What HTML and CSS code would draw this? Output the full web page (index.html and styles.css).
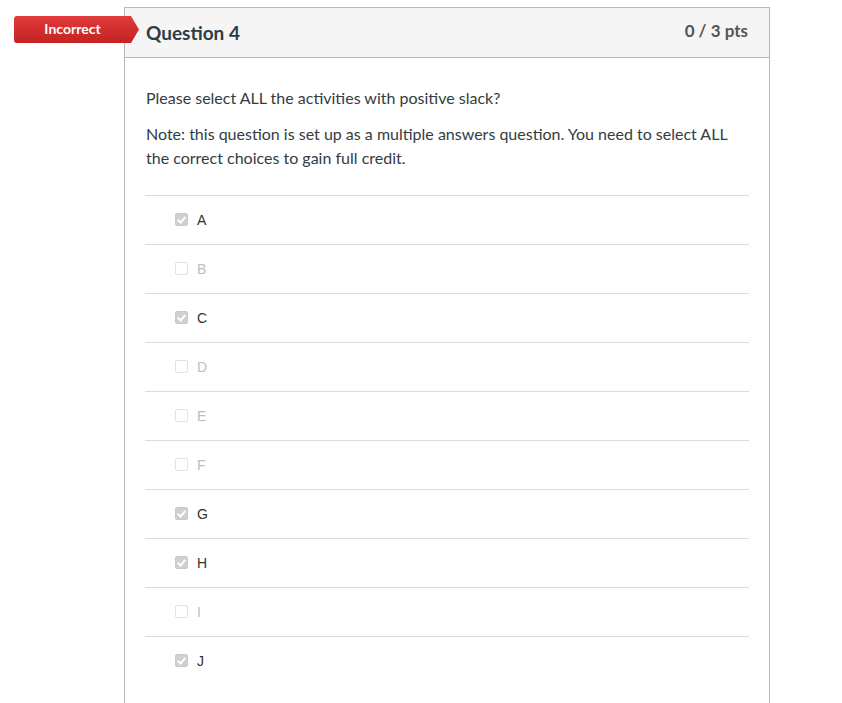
FILE: index.html
```html
<!DOCTYPE html>
<html>
<head>
<meta charset="utf-8">
<link rel="stylesheet" href="styles.css">
</head>
<body>
<div class="page">
  <div class="question">
    <div class="badge">Incorrect</div>
    <div class="q-header">
      <span class="q-title">Question 4</span>
      <span class="q-pts">0 / 3 pts</span>
    </div>
    <div class="q-body">
      <p>Please select ALL the activities with positive slack?</p>
      <p>Note: this question is set up as a multiple answers question. You need to select ALL the correct choices to gain full credit.</p>
      <div class="answers">
        <div class="answer sel"><span class="cb"></span><span class="lbl">A</span></div>
        <div class="answer"><span class="cb"></span><span class="lbl">B</span></div>
        <div class="answer sel"><span class="cb"></span><span class="lbl">C</span></div>
        <div class="answer"><span class="cb"></span><span class="lbl">D</span></div>
        <div class="answer"><span class="cb"></span><span class="lbl">E</span></div>
        <div class="answer"><span class="cb"></span><span class="lbl">F</span></div>
        <div class="answer sel"><span class="cb"></span><span class="lbl">G</span></div>
        <div class="answer sel"><span class="cb"></span><span class="lbl">H</span></div>
        <div class="answer"><span class="cb"></span><span class="lbl">I</span></div>
        <div class="answer sel"><span class="cb"></span><span class="lbl">J</span></div>
      </div>
    </div>
  </div>
</div>
</body>
</html>
```

FILE: styles.css
```css
html, body {
  margin: 0;
  padding: 0;
  background: #fff;
  font-family: Lato, "Open Sans", sans-serif;
  color: #2d3b45;
  overflow: hidden;
}
.page {
  padding: 7px 0 0 124px;
}
.question {
  position: relative;
  width: 644px;
  border: 1px solid #b9b9b9;
  border-bottom: none;
  min-height: 720px;
}
.badge {
  position: absolute;
  left: -111px;
  top: 8px;
  width: 117px;
  height: 27px;
  padding-right: 8px;
  box-sizing: content-box;
  background: linear-gradient(#e13b3c, #c52222);
  border-radius: 3px 0 0 3px;
  color: #fff;
  font-weight: 700;
  font-size: 14px;
  line-height: 26px;
  text-align: center;
  clip-path: polygon(0 0, 117px 0, 125px 50%, 117px 100%, 0 100%);
}
.q-header {
  display: flex;
  justify-content: space-between;
  align-items: center;
  height: 49px;
  padding: 0 21px 0 21px;
  background: #f5f5f5;
  border-bottom: 1px solid #b9b9b9;
}
.q-title {
  font-size: 19px;
  font-weight: 700;
  color: #2d3b45;
}
.q-pts {
  font-size: 17px;
  font-weight: 700;
  color: #555;
  margin-top: -5px;
}
.q-body {
  padding: 28px 20px 0 20px;
}
.q-body p {
  margin: 0 0 12px 1px;
  font-size: 16px;
  line-height: 24px;
  color: #333c42;
}
.answers {
  margin-top: 25px;
}
.answer {
  display: flex;
  align-items: center;
  box-sizing: border-box;
  padding-bottom: 1px;
  height: 49px;
  border-top: 1px solid #dcdcdc;
  padding-left: 30px;
}
.cb {
  width: 11px;
  height: 11px;
  border: 1px solid #e2e2e2;
  border-radius: 2px;
  background: #fff;
  position: relative;
}
.answer.sel .cb {
  background: #d0d0d0;
  border-color: #cacaca;
}
.answer.sel .cb::after {
  content: "";
  position: absolute;
  left: 3px;
  top: 1px;
  width: 3px;
  height: 6px;
  border: solid #fff;
  border-width: 0 2px 2px 0;
  transform: rotate(40deg);
}
.lbl {
  margin-left: 9px;
  font-family: "Liberation Sans", Arial, sans-serif;
  font-size: 14px;
  color: #bdbdbd;
}
.answer.sel .lbl {
  color: #333;
}
```
